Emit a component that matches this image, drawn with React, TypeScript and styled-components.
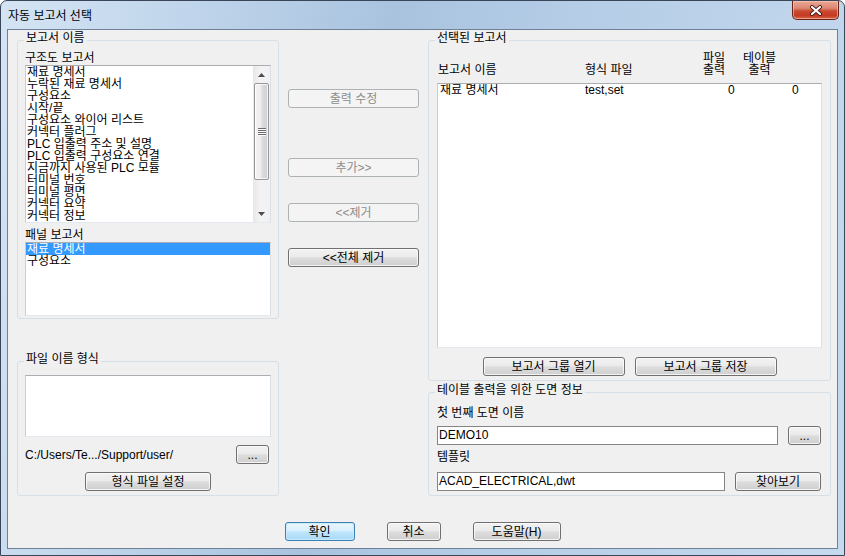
import React from 'react'
import styled, { createGlobalStyle } from 'styled-components'

const FONT = `"Liberation Sans", "Noto Sans CJK KR", sans-serif`

const GlobalStyle = createGlobalStyle`
  html, body { margin: 0; padding: 0; background: #ffffff; }
  body { font-family: ${FONT}; font-size: 12px; color: #000; }
  * { box-sizing: border-box; }
`

// window frame (Win7 aero look)
const Window = styled.div`
  width: 845px;
  height: 556px;
  display: flex;
  flex-direction: column;
  padding: 0 6px 6px;
  border: 1px solid #3a4657;
  border-radius: 7px 7px 0 0;
  background: linear-gradient(100deg, #d4e4f4 0%, #c0d5eb 20%, #a9c3df 42%, #b4cce6 60%, #c6daef 100%);
  overflow: hidden;
`

const TitleBar = styled.div`
  height: 28px;
  flex: none;
  display: flex;
  align-items: flex-start;
  margin-right: -1px;
  padding-left: 1px;
`

const Title = styled.div`
  margin-top: 8px;
  line-height: 14px;
  font-size: 12px;
  color: #000;
`

const CloseButton = styled.div`
  margin-left: auto;
  width: 47px;
  height: 19px;
  display: flex;
  align-items: center;
  justify-content: center;
  border: 1px solid #6b2418;
  border-top: none;
  border-radius: 0 0 5px 5px;
  background: linear-gradient(#eaa896 0%, #dc8873 40%, #c94b31 55%, #c63a22 80%, #d4674c 100%);
  box-shadow: inset 0 0 0 1px rgba(255, 210, 195, 0.55);
`

const Client = styled.div`
  flex: 1;
  display: flex;
  flex-direction: column;
  background: #f0f0f0;
  border: 1px solid #6f8197;
`

const Main = styled.div`
  display: flex;
  gap: 9px;
  padding: 10px 0 0 9px;
`

const Column = styled.div<{ $w: number }>`
  width: ${p => p.$w}px;
  flex: none;
  display: flex;
  flex-direction: column;
`

const MiddleColumn = styled(Column)`
  padding-top: 49px;
`

const Group = styled.div<{ $pad: string; $top?: number }>`
  position: relative;
  margin-top: ${p => p.$top ?? 0}px;
  padding: ${p => p.$pad};
  border: 1px solid #d5dfe5;
  border-radius: 3px;
  display: flex;
  flex-direction: column;
`

const Caption = styled.span`
  position: absolute;
  top: -10px;
  left: 6px;
  padding: 0 2px;
  line-height: 14px;
  background: #f0f0f0;
  white-space: nowrap;
`

const Label = styled.div<{ $top?: number }>`
  margin-top: ${p => p.$top ?? 0}px;
  line-height: 14px;
  height: 14px;
  white-space: nowrap;
`

const ListBox = styled.div<{ $h: number }>`
  height: ${p => p.$h}px;
  flex: none;
  display: flex;
  background: #fff;
  border: 1px solid;
  border-color: #abadb3 #dbdfe6 #e3e9ef #c9ccd3;
  overflow: hidden;
`

const Items = styled.div`
  flex: 1;
  min-width: 0;
  overflow: hidden;
`

const Item = styled.div<{ $selected?: boolean }>`
  height: 12px;
  line-height: 12px;
  padding-left: 1px;
  white-space: nowrap;
  background: ${p => (p.$selected ? '#3399ff' : 'transparent')};
  color: ${p => (p.$selected ? '#ffffff' : '#000000')};
`

const ScrollBar = styled.div`
  width: 17px;
  flex: none;
  display: flex;
  flex-direction: column;
  background: linear-gradient(to right, #e7e7e7, #f3f3f3 40%, #f1f1f1);
`

const Arrow = styled.div`
  height: 17px;
  flex: none;
  display: flex;
  align-items: center;
  justify-content: center;
`

const Thumb = styled.div<{ $h: number }>`
  height: ${p => p.$h}px;
  margin: 0 1px;
  border: 1px solid #979797;
  border-radius: 2px;
  background: linear-gradient(to right, #f5f5f5 0%, #ececec 45%, #dcdcdc 55%, #d0d0d0 100%);
  box-shadow: inset 0 0 0 1px rgba(255, 255, 255, 0.75);
  display: flex;
  align-items: center;
  justify-content: center;
`

const Track = styled.div`
  flex: 1;
`

const Button = styled.button<{ $w: number; $primary?: boolean; $top?: number }>`
  width: ${p => p.$w}px;
  height: 19px;
  flex: none;
  margin-top: ${p => p.$top ?? 0}px;
  padding: 0;
  font-family: ${FONT};
  font-size: 12px;
  line-height: 16px;
  color: #000;
  border: 1px solid ${p => (p.$primary ? '#3c7fb1' : '#707070')};
  border-radius: 3px;
  background: ${p =>
    p.$primary
      ? 'linear-gradient(#eaf6fd 0%, #d9f0fc 45%, #bee6fd 52%, #a7d9f5 100%)'
      : 'linear-gradient(#f2f2f2 0%, #ebebeb 45%, #dddddd 52%, #cfcfcf 100%)'};
  box-shadow: inset 0 0 0 1px ${p => (p.$primary ? 'rgba(200,235,255,0.9)' : 'rgba(252,252,252,0.8)')};
  white-space: nowrap;

  &:disabled {
    color: #8d8d8d;
    border-color: #adb2b5;
    background: #f4f4f4;
    box-shadow: none;
  }
`

const TextBox = styled.div<{ $h: number }>`
  height: ${p => p.$h}px;
  flex: none;
  background: #fff;
  border: 1px solid;
  border-color: #abadb3 #dbdfe6 #e3e9ef #c9ccd3;
`

const PathRow = styled.div`
  margin-top: 8px;
  height: 19px;
  display: flex;
  align-items: center;
  justify-content: space-between;
  padding-right: 2px;
`

const PathText = styled.span`
  font-size: 12px;
  white-space: nowrap;
`

const CenterButton = styled(Button)`
  align-self: center;
`

const ColumnHeader = styled.div`
  height: 25px;
  margin-left: 1px;
  display: grid;
  grid-template-columns: 147px 118px 40px 1fr;
  align-items: end;
  line-height: 12px;
  padding-bottom: 1px;
`

const HeadCell = styled.div`
  justify-self: start;
  text-align: center;
  white-space: nowrap;
`

const ReportRow = styled.div`
  display: grid;
  grid-template-columns: 147px 118px 40px 1fr;
  height: 12px;
  line-height: 12px;
  white-space: nowrap;
`

const Cell = styled.div<{ $indent?: number }>`
  padding-left: ${p => p.$indent ?? 0}px;
`

const ButtonPair = styled.div`
  margin-top: 9px;
  display: flex;
  justify-content: center;
  gap: 10px;
`

const FieldRow = styled.div<{ $top: number }>`
  margin-top: ${p => p.$top}px;
  height: 19px;
  display: flex;
  align-items: center;
  gap: 10px;
`

const Field = styled.div`
  flex: 1;
  height: 19px;
  padding-left: 1px;
  line-height: 17px;
  background: #fff;
  border: 1px solid #858585;
  white-space: nowrap;
`

const Footer = styled.div`
  margin-top: auto;
  padding-bottom: 7px;
  display: flex;
  justify-content: center;
  gap: 32px;
`

const schematicReports = [
  '재료 명세서',
  '누락된 재료 명세서',
  '구성요소',
  '시작/끝',
  '구성요소 와이어 리스트',
  '커넥터 플러그',
  'PLC 입출력 주소 및 설명',
  'PLC 입출력 구성요소 연결',
  '지금까지 사용된 PLC 모듈',
  '터미널 번호',
  '터미널 평면',
  '커넥터 요약',
  '커넥터 정보',
]

const panelReports = ['재료 명세서', '구성요소']

const CloseIcon = () => (
  <svg width="14" height="11" viewBox="0 0 14 11">
    <path d="M3 2 L11 9 M11 2 L3 9" stroke="#4a1a12" strokeWidth="4" strokeLinecap="round" />
    <path d="M3 2 L11 9 M11 2 L3 9" stroke="#ffffff" strokeWidth="2.2" strokeLinecap="round" />
  </svg>
)

const ArrowIcon = ({ down }: { down?: boolean }) => (
  <svg width="7" height="4" viewBox="0 0 7 4">
    <path d={down ? 'M0 0 H7 L3.5 4 Z' : 'M0 4 H7 L3.5 0 Z'} fill="#4d4d4d" />
  </svg>
)

const GripIcon = () => (
  <svg width="8" height="8" viewBox="0 0 8 8">
    {[0, 2, 4, 6].map(y => (
      <g key={y}>
        <rect x="0" y={y} width="8" height="1" fill="#6d6d6d" />
        <rect x="0" y={y + 1} width="8" height="1" fill="#fbfbfb" />
      </g>
    ))}
  </svg>
)

export default function App() {
  return (
    <>
      <GlobalStyle />
      <Window>
        <TitleBar>
          <Title>자동 보고서 선택</Title>
          <CloseButton>
            <CloseIcon />
          </CloseButton>
        </TitleBar>
        <Client>
          <Main>
            <Column $w={262}>
              <Group $pad="10px 7px 2px">
                <Caption>보고서 이름</Caption>
                <Label>구조도 보고서</Label>
                <ListBox $h={158}>
                  <Items>
                    {schematicReports.map(r => (
                      <Item key={r}>{r}</Item>
                    ))}
                  </Items>
                  <ScrollBar>
                    <Arrow>
                      <ArrowIcon />
                    </Arrow>
                    <Thumb $h={97}>
                      <GripIcon />
                    </Thumb>
                    <Track />
                    <Arrow>
                      <ArrowIcon down />
                    </Arrow>
                  </ScrollBar>
                </ListBox>
                <Label $top={5}>패널 보고서</Label>
                <ListBox $h={74}>
                  <Items>
                    {panelReports.map((r, i) => (
                      <Item key={r} $selected={i === 0}>
                        {r}
                      </Item>
                    ))}
                  </Items>
                </ListBox>
              </Group>

              <Group $pad="13px 7px 4px" $top={42}>
                <Caption>파일 이름 형식</Caption>
                <TextBox $h={62} />
                <PathRow>
                  <PathText>C:/Users/Te.../Support/user/</PathText>
                  <Button $w={33}>...</Button>
                </PathRow>
                <CenterButton $w={126} $top={8}>
                  형식 파일 설정
                </CenterButton>
              </Group>
            </Column>

            <MiddleColumn $w={131}>
              <Button $w={131} disabled>
                출력 수정
              </Button>
              <Button $w={131} $top={50} disabled>
                추가&gt;&gt;
              </Button>
              <Button $w={131} $top={26} disabled>
                &lt;&lt;제거
              </Button>
              <Button $w={131} $top={26}>
                &lt;&lt;전체 제거
              </Button>
            </MiddleColumn>

            <Column $w={403}>
              <Group $pad="11px 8px 4px">
                <Caption>선택된 보고서</Caption>
                <ColumnHeader>
                  <HeadCell>보고서 이름</HeadCell>
                  <HeadCell>형식 파일</HeadCell>
                  <HeadCell>
                    파일
                    <br />
                    출력
                  </HeadCell>
                  <HeadCell>
                    테이블
                    <br />
                    출력
                  </HeadCell>
                </ColumnHeader>
                <ListBox $h={265} style={{ marginTop: 6 }}>
                  <Items>
                    <ReportRow>
                      <Cell $indent={2}>재료 명세서</Cell>
                      <Cell>test,set</Cell>
                      <Cell $indent={25}>0</Cell>
                      <Cell $indent={49}>0</Cell>
                    </ReportRow>
                  </Items>
                </ListBox>
                <ButtonPair>
                  <Button $w={142}>보고서 그룹 열기</Button>
                  <Button $w={142}>보고서 그룹 저장</Button>
                </ButtonPair>
              </Group>

              <Group $pad="13px 9px 4px 8px" $top={11}>
                <Caption>테이블 출력을 위한 도면 정보</Caption>
                <Label>첫 번째 도면 이름</Label>
                <FieldRow $top={6}>
                  <Field>DEMO10</Field>
                  <Button $w={33}>...</Button>
                </FieldRow>
                <Label $top={5}>템플릿</Label>
                <FieldRow $top={8}>
                  <Field>ACAD_ELECTRICAL,dwt</Field>
                  <Button $w={86}>찾아보기</Button>
                </FieldRow>
              </Group>
            </Column>
          </Main>

          <Footer>
            <Button $w={70} $primary>
              확인
            </Button>
            <Button $w={54}>취소</Button>
            <Button $w={88}>도움말(H)</Button>
          </Footer>
        </Client>
      </Window>
    </>
  )
}
